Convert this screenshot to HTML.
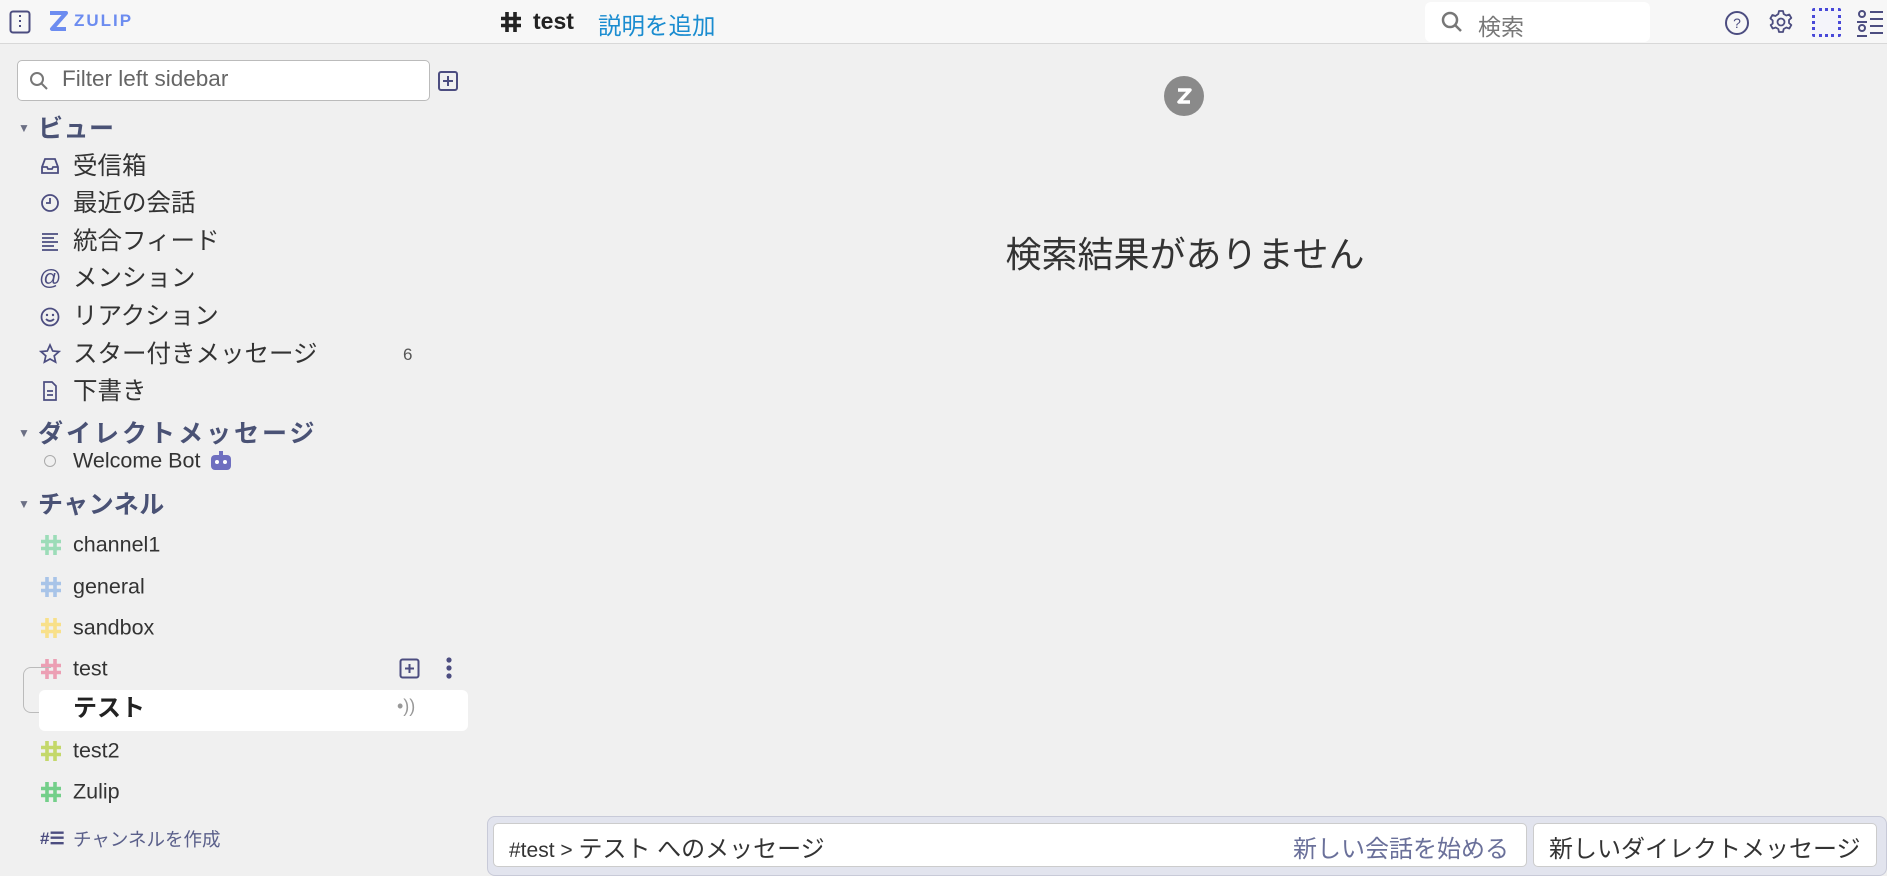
<!DOCTYPE html>
<html><head><meta charset="utf-8"><style>
*{margin:0;padding:0;box-sizing:border-box}
body{width:1887px;height:871px;overflow:hidden;background:#f0f0f0;font-family:"Liberation Sans","Noto Sans CJK JP",sans-serif;color:#333;position:relative}
.a{position:absolute}
#hdr{left:0;top:0;width:1887px;height:44px;background:#f7f7f7;border-bottom:1px solid #d8d8d8}
.row{position:absolute;left:73px;font-size:24.5px;color:#333;line-height:1;transform:translateY(-50%);white-space:nowrap}
.lat{font-size:21.5px}
.ic{position:absolute;left:39px;width:22px;height:22px;transform:translateY(-50%)}
.sec{position:absolute;left:38px;font-size:25px;font-weight:bold;color:#4a5275;transform:translateY(-50%);letter-spacing:0.5px;white-space:nowrap}
.tri{position:absolute;left:18px;font-size:12px;color:#6b6f84;transform:translateY(-50%)}
.hash{position:absolute;left:40px;width:22px;height:22px;transform:translateY(-50%)}
</style></head><body>
<svg width="0" height="0" style="position:absolute"><defs><g id="h"><path d="M7 1v20M15 1v20M1 7.5h20M1 14.5h20" stroke-width="3.6" fill="none"/></g></defs></svg>
<div id="hdr" class="a">
 <svg class="a" style="left:9px;top:10px" width="22" height="24" viewBox="0 0 22 24"><rect x="1.5" y="1.5" width="19" height="21" rx="2.5" fill="none" stroke="#4c4d80" stroke-width="2"/><line x1="11" y1="5" x2="11" y2="19" stroke="#4c4d80" stroke-width="2" stroke-dasharray="2 3"/></svg>
 <svg class="a" style="left:48px;top:11px" width="20" height="22" viewBox="0 0 20 22"><path d="M2 2h16l-14 16h14" fill="none" stroke="#6c8cf0" stroke-width="4" stroke-linejoin="round"/></svg>
 <div class="a" style="left:74px;top:11px;font-size:17px;font-weight:bold;letter-spacing:2px;color:#6c8cf0">ZULIP</div>
 <svg class="a" style="left:500px;top:11px" width="22" height="22" viewBox="0 0 22 22" stroke="#222"><use href="#h"/></svg>
 <div class="a" style="left:533px;top:8px;font-size:23px;font-weight:bold;color:#222">test</div>
 <div class="a" style="left:598px;top:7px;font-size:23.5px;color:#1a8cd0">説明を追加</div>
 <div class="a" style="left:1425px;top:2px;width:225px;height:40px;background:#fff;border-radius:6px"></div>
 <svg class="a" style="left:1440px;top:10px" width="24" height="24" viewBox="0 0 24 24"><circle cx="10" cy="10" r="7" fill="none" stroke="#777" stroke-width="2.5"/><line x1="15" y1="15" x2="21" y2="21" stroke="#777" stroke-width="2.5"/></svg>
 <div class="a" style="left:1478px;top:8px;font-size:23px;color:#777">検索</div>
 <svg class="a" style="left:1724px;top:10px" width="26" height="26" viewBox="0 0 26 26"><circle cx="13" cy="13" r="11" fill="none" stroke="#4c4d80" stroke-width="2"/><text x="13" y="18" font-size="14" text-anchor="middle" fill="#4c4d80" font-family="Liberation Sans">?</text></svg>
 <svg class="a" style="left:1768px;top:9px" width="26" height="26" viewBox="0 0 26 26"><path d="M11 2h4l.7 3 2.6 1.5 3-1 2 3.4-2.3 2.1v3l2.3 2.1-2 3.4-3-1-2.6 1.5-.7 3h-4l-.7-3-2.6-1.5-3 1-2-3.4L4.7 14.5v-3L2.4 9.4l2-3.4 3 1L10.3 5z" fill="none" stroke="#4c4d80" stroke-width="1.8" stroke-linejoin="round"/><circle cx="13" cy="13" r="3.5" fill="none" stroke="#4c4d80" stroke-width="1.8"/></svg>
 <div class="a" style="left:1812px;top:8px;width:29px;height:29px;border:3px dotted #4848d8;background:#f4f4fa;border-radius:2px"></div>
 <svg class="a" style="left:1856px;top:8px" width="28" height="30" viewBox="0 0 28 30"><circle cx="6" cy="6" r="3" fill="none" stroke="#4c4d80" stroke-width="2"/><circle cx="6" cy="20" r="3" fill="none" stroke="#4c4d80" stroke-width="2"/><path d="M1 14h10M1 28h10M14 4h13M14 11h13M14 18h13M14 25h13" stroke="#4c4d80" stroke-width="2"/></svg>
</div>
<div class="a" style="left:17px;top:60px;width:413px;height:41px;background:#fff;border:1px solid #bbb;border-radius:5px"></div>
<svg class="a" style="left:28px;top:70px" width="22" height="22" viewBox="0 0 22 22"><circle cx="9" cy="9" r="6" fill="none" stroke="#777" stroke-width="2"/><line x1="13" y1="13" x2="19" y2="19" stroke="#777" stroke-width="2"/></svg>
<div class="a" style="left:62px;top:66px;font-size:22.5px;color:#666">Filter left sidebar</div>
<svg class="a" style="left:437px;top:70px" width="22" height="22" viewBox="0 0 22 22"><rect x="2" y="2" width="18" height="18" rx="2" fill="none" stroke="#4c4d80" stroke-width="2"/><path d="M11 6v10M6 11h10" stroke="#4c4d80" stroke-width="2"/></svg>

<div class="tri" style="top:128px">▼</div><div class="sec" style="top:127px">ビュー</div>
<svg class="ic" style="top:166px" viewBox="0 0 22 22"><path d="M3 12l3-8h10l3 8v6H3z M3 12h5l1 2h4l1-2h5" fill="none" stroke="#4c4d80" stroke-width="1.8"/></svg><div class="row" style="top:167px">受信箱</div>
<svg class="ic" style="top:203px" viewBox="0 0 22 22"><circle cx="11" cy="11" r="8" fill="none" stroke="#4c4d80" stroke-width="1.8"/><path d="M11 6v5H7" fill="none" stroke="#4c4d80" stroke-width="1.8"/></svg><div class="row" style="top:204px">最近の会話</div>
<svg class="ic" style="top:241px" viewBox="0 0 22 22"><path d="M3 4h16M3 8h12M3 12h16M3 16h12M3 20h16" stroke="#4c4d80" stroke-width="1.8"/></svg><div class="row" style="top:242px">統合フィード</div>
<div class="ic" style="top:278px;font-size:22px;color:#4c4d80;line-height:22px">@</div><div class="row" style="top:279px">メンション</div>
<svg class="ic" style="top:317px" viewBox="0 0 22 22"><circle cx="11" cy="11" r="8.5" fill="none" stroke="#4c4d80" stroke-width="1.8"/><circle cx="8" cy="9" r="1.2" fill="#4c4d80"/><circle cx="14" cy="9" r="1.2" fill="#4c4d80"/><path d="M7 13q4 4 8 0" fill="none" stroke="#4c4d80" stroke-width="1.8"/></svg><div class="row" style="top:317px">リアクション</div>
<svg class="ic" style="top:354px" viewBox="0 0 22 22"><path d="M11 2l2.7 6 6.3.6-4.8 4.2 1.4 6.3L11 16l-5.6 3.1 1.4-6.3L2 8.6 8.3 8z" fill="none" stroke="#4c4d80" stroke-width="1.7"/></svg><div class="row" style="top:355px">スター付きメッセージ</div>
<div class="a" style="left:403px;top:345px;font-size:17px;color:#555">6</div>
<svg class="ic" style="top:391px" viewBox="0 0 22 22"><path d="M5 2h8l4 4v14H5z M8 11h6M8 15h6" fill="none" stroke="#4c4d80" stroke-width="1.7"/></svg><div class="row" style="top:392px">下書き</div>

<div class="tri" style="top:433px">▼</div><div class="sec" style="top:432px;letter-spacing:3px">ダイレクトメッセージ</div>
<div class="a" style="left:44px;top:455px;width:12px;height:12px;border:1px solid #aaa;border-radius:50%"></div>
<div class="row lat" style="top:461px">Welcome Bot</div>
<svg class="a" style="left:210px;top:451px" width="22" height="20" viewBox="0 0 22 20"><rect x="1" y="4" width="20" height="15" rx="4" fill="#6f6fc0"/><rect x="9" y="0" width="4" height="4" fill="#6f6fc0"/><circle cx="7" cy="11" r="2" fill="#fff"/><circle cx="15" cy="11" r="2" fill="#fff"/></svg>

<div class="tri" style="top:504px">▼</div><div class="sec" style="top:503px">チャンネル</div>
<svg class="hash" style="top:545px" viewBox="0 0 22 22" stroke="#9cdcb8"><use href="#h"/></svg><div class="row lat" style="top:545px">channel1</div>
<svg class="hash" style="top:587px" viewBox="0 0 22 22" stroke="#a8c4e8"><use href="#h"/></svg><div class="row lat" style="top:587px">general</div>
<svg class="hash" style="top:628px" viewBox="0 0 22 22" stroke="#f8e08a"><use href="#h"/></svg><div class="row lat" style="top:628px">sandbox</div>
<svg class="hash" style="top:669px" viewBox="0 0 22 22" stroke="#ec9fb4"><use href="#h"/></svg><div class="row lat" style="top:669px">test</div>
<svg class="a" style="left:399px;top:658px" width="21" height="21" viewBox="0 0 21 21"><rect x="1.5" y="1.5" width="18" height="18" rx="2" fill="none" stroke="#4c4d80" stroke-width="2"/><path d="M10.5 6v9M6 10.5h9" stroke="#4c4d80" stroke-width="2"/></svg>
<svg class="a" style="left:444px;top:656px" width="10" height="24" viewBox="0 0 10 24"><circle cx="5" cy="4" r="2.6" fill="#4c4d80"/><circle cx="5" cy="12" r="2.6" fill="#4c4d80"/><circle cx="5" cy="20" r="2.6" fill="#4c4d80"/></svg>
<div class="a" style="left:23px;top:667px;width:28px;height:46px;border:1px solid #bbb;border-right:none;border-radius:8px 0 0 8px"></div>
<div class="a" style="left:39px;top:690px;width:429px;height:41px;background:#fff;border-radius:6px"></div>
<div class="row" style="top:709px;font-weight:bold;font-size:24px;color:#222">テスト</div>
<div class="a" style="left:397px;top:696px;font-size:18px;color:#999">•))</div>
<svg class="hash" style="top:751px" viewBox="0 0 22 22" stroke="#c4d86a"><use href="#h"/></svg><div class="row lat" style="top:751px">test2</div>
<svg class="hash" style="top:792px" viewBox="0 0 22 22" stroke="#74cf8a"><use href="#h"/></svg><div class="row lat" style="top:792px">Zulip</div>
<div class="a" style="left:40px;top:829px;font-size:17px;font-weight:bold;color:#4c4d80">#☰</div>
<div class="row" style="top:840px;font-size:18.5px;color:#5a5f8a">チャンネルを作成</div>

<div class="a" style="left:1164px;top:76px;width:40px;height:40px;border-radius:50%;background:#8a8a8a"></div>
<svg class="a" style="left:1174px;top:86px" width="20" height="20" viewBox="0 0 20 20"><path d="M4 4h12L5 16h11" fill="none" stroke="#fff" stroke-width="3.5" stroke-linejoin="round"/></svg>
<div class="a" style="left:885px;top:226px;width:600px;text-align:center;font-size:36px;color:#333">検索結果がありません</div>

<div class="a" style="left:487px;top:816px;width:1400px;height:60px;background:#e2e4ee;border:1px solid #c8cad8;border-radius:8px"></div>
<div class="a" style="left:493px;top:823px;width:1034px;height:44px;background:#fff;border:1px solid #ccc;border-radius:5px"></div>
<div class="a" style="left:509px;top:829px;font-size:21px;color:#333;white-space:nowrap">#test &gt; <span style="font-size:24px">テスト へのメッセージ</span></div>
<div class="a" style="left:1293px;top:829px;font-size:24px;color:#6a709a">新しい会話を始める</div>
<div class="a" style="left:1533px;top:823px;width:344px;height:44px;background:#fff;border:1px solid #ccc;border-radius:5px"></div>
<div class="a" style="left:1549px;top:829px;font-size:24px;color:#333;white-space:nowrap">新しいダイレクトメッセージ</div>
</body></html>
